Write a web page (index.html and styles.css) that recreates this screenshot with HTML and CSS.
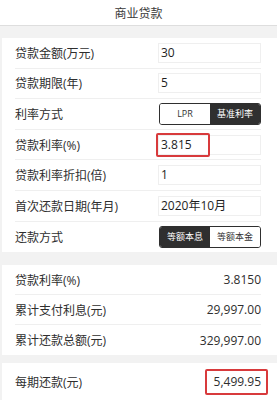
FILE: index.html
```html
<!DOCTYPE html>
<html lang="zh">
<head>
<meta charset="utf-8">
<title>商业贷款</title>
<link rel="stylesheet" href="styles.css">
</head>
<body>
<div class="page">
  <header class="title">商业贷款</header>
  <div class="gap gap-top"></div>
  <section class="card">
    <div class="row"><span class="label">贷款金额(万元)</span><div class="input">30</div></div>
    <div class="row"><span class="label">贷款期限(年)</span><div class="input">5</div></div>
    <div class="row"><span class="label">利率方式</span>
      <div class="toggle"><span class="opt">LPR</span><span class="opt on">基准利率</span></div>
    </div>
    <div class="row"><span class="label">贷款利率(%)</span><div class="input">3.815<span class="mark mark-rate"></span></div></div>
    <div class="row"><span class="label">贷款利率折扣(倍)</span><div class="input">1</div></div>
    <div class="row"><span class="label">首次还款日期(年月)</span><div class="input">2020年10月</div></div>
    <div class="row last"><span class="label">还款方式</span>
      <div class="toggle"><span class="opt on">等额本息</span><span class="opt">等额本金</span></div>
    </div>
  </section>
  <div class="gap gap-mid"></div>
  <section class="card results">
    <div class="row"><span class="label">贷款利率(%)</span><span class="value">3.8150</span></div>
    <div class="row"><span class="label">累计支付利息(元)</span><span class="value">29,997.00</span></div>
    <div class="row last"><span class="label">累计还款总额(元)</span><span class="value">329,997.00</span></div>
  </section>
  <div class="gap gap-small"></div>
  <section class="card total">
    <div class="row last"><span class="label">每期还款(元)</span><span class="value">5,499.95</span><span class="mark mark-total"></span></div>
  </section>
</div>
</body>
</html>
```
FILE: styles.css
```css
* { box-sizing: border-box; }
html, body { margin: 0; padding: 0; }
body {
  background: #f2f2f2;
  font-family: "Open Sans", "Noto Sans CJK SC", sans-serif;
  color: #333;
  width: 277px;
  height: 400px;
  overflow: hidden;
}
.page {
  margin-left: 2px;
  background: #f2f2f2;
}
.title {
  height: 26px;
  background: #fff;
  border-bottom: 1px solid #dedede;
  display: flex;
  align-items: center;
  justify-content: center;
  font-size: 12px;
  color: #3a3a3a;
  margin-left: -2px;
}
.gap-top { height: 12px; }
.gap-mid { height: 13px; }
.gap-small { height: 8px; }
.card {
  background: #fff;
}
.row {
  display: flex;
  align-items: center;
  height: 30.6px;
  margin: 0 16px 0 13px;
  border-bottom: 1px solid #efefef;
  position: relative;
}
.row.last { border-bottom: none; }
.label {
  flex: 1;
  font-size: 12px;
  color: #2e2e2e;
}
.input {
  position: relative;
  width: 103px;
  height: 20px;
  border: 1px solid #efefef;
  padding-left: 2px;
  font-size: 12px;
  line-height: 18px;
  color: #1e1e1e;
}
.toggle {
  display: flex;
  width: 102px;
  height: 22px;
  border: 1px solid #2f2f2f;
  border-radius: 3px;
  overflow: hidden;
}
.opt {
  flex: 1;
  display: flex;
  align-items: center;
  justify-content: center;
  font-size: 9px;
  color: #333;
  background: #fff;
}
.opt.on {
  background: #2f2f2f;
  color: #fff;
}
.results .row { height: 30px; }
.value {
  font-size: 12px;
  color: #2e2e2e;
}
.total .row { height: 37px; }
.mark {
  position: absolute;
  border: 2px solid #d83a3c;
  border-radius: 2px;
}
.mark-rate {
  left: -3px;
  top: -3px;
  width: 54px;
  height: 24px;
}
.mark-total {
  right: -7px;
  top: 6px;
  width: 63px;
  height: 26px;
}
```
